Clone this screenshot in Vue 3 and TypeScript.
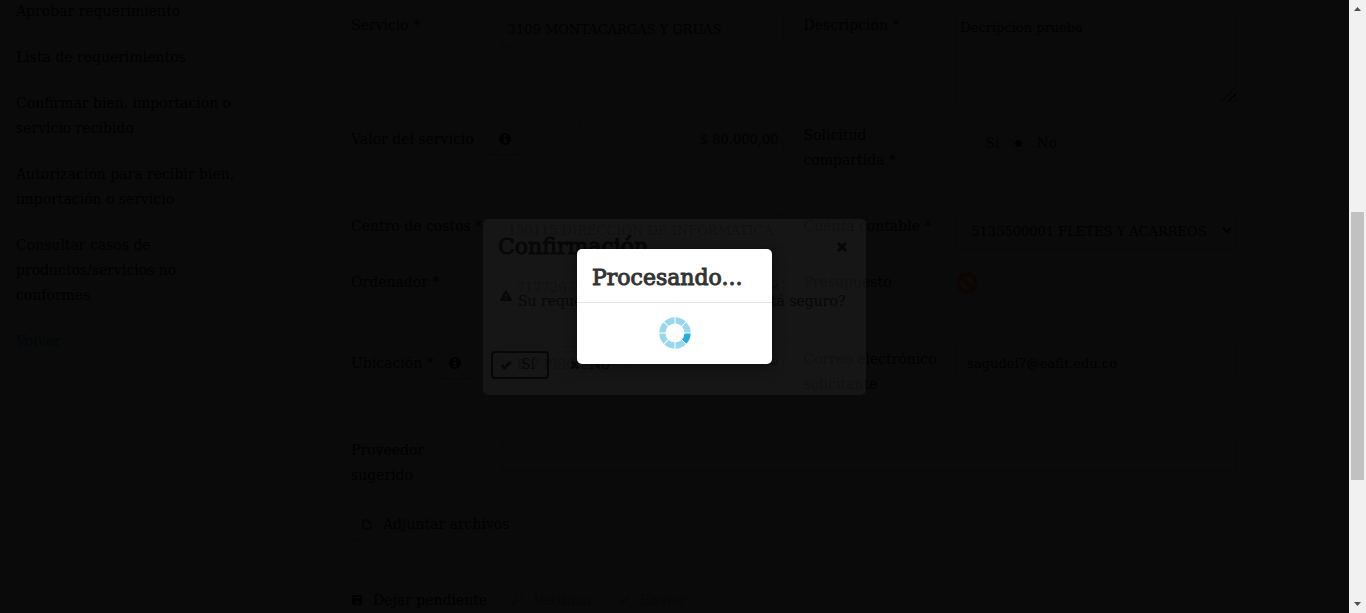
<script setup lang="ts">
import { ref } from 'vue'

const menu: string[] = [
  'Aprobar requerimiento',
  'Lista de requerimientos',
  'Confirmar bien, importación o servicio recibido',
  'Autorización para recibir bien, importación o servicio',
  'Consultar casos de productos/servicios no conformes',
]

const servicio = ref('3109 MONTACARGAS Y GRUAS')
const descripcion = ref('Decripcion prueba')
const valor = ref('$ 80.000,00')
const compartida = ref('no')
const centro = ref('150115 DIRECCIÓN DE INFORMÁTICA')
const ordenador = ref('71772675')
const ubicacion = ref('B-7 PISO 2')
const correo = ref('sagudel7@eafit.edu.co')
const proveedor = ref('')
const segments: number[] = [0, 45, 90, 135, 180, 225, 270, 315]
</script>

<template>
  <div class="window">
    <div class="page">
      <nav class="menu">
        <a v-for="item in menu" :key="item" href="#">{{ item }}</a>
        <a href="#" class="back">Volver</a>
      </nav>

      <form class="form" @submit.prevent>
        <div class="grid">
          <label for="servicio">Servicio *</label>
          <input id="servicio" v-model="servicio" type="text" />
          <label for="descripcion" class="second">Descripción *</label>
          <textarea id="descripcion" v-model="descripcion"></textarea>

          <div class="with-info">
            <label for="valor">Valor del servicio</label>
            <button type="button" class="info" aria-label="Ayuda valor">
              <svg viewBox="0 0 12 12"><circle cx="6" cy="6" r="6" /><path class="cut" d="M5 2h2v2H5zM4 5h3v4h1v1H4V9h1V6H4z" /></svg>
            </button>
          </div>
          <input id="valor" v-model="valor" class="amount" type="text" />
          <span class="second">Solicitud compartida *</span>
          <div class="radios">
            <label><input v-model="compartida" type="radio" name="compartida" value="si" /><span>Si</span></label>
            <label><input v-model="compartida" type="radio" name="compartida" value="no" /><span>No</span></label>
          </div>

          <label for="centro">Centro de costos *</label>
          <input id="centro" v-model="centro" type="text" />
          <label for="cuenta" class="second">Cuenta contable *</label>
          <div class="pick">
            <select id="cuenta"><option>5135500001 FLETES Y ACARREOS</option></select>
            <svg viewBox="0 0 10 10"><path d="M1 3l4 4 4-4" /></svg>
          </div>

          <label for="ordenador">Ordenador *</label>
          <div class="pick person">
            <select id="ordenador"><option>{{ ordenador }}</option></select>
            <svg viewBox="0 0 10 10"><path d="M1 3l4 4 4-4" /></svg>
          </div>
          <span class="second">Presupuesto</span>
          <svg class="ban" viewBox="0 0 20 20"><circle cx="10" cy="10" r="8" /><path d="M4 4l12 12" /></svg>

          <div class="with-info near">
            <label for="ubicacion">Ubicación *</label>
            <button type="button" class="info" aria-label="Ayuda ubicación">
              <svg viewBox="0 0 12 12"><circle cx="6" cy="6" r="6" /><path class="cut" d="M5 2h2v2H5zM4 5h3v4h1v1H4V9h1V6H4z" /></svg>
            </button>
          </div>
          <div class="pick person">
            <select id="ubicacion"><option>{{ ubicacion }}</option></select>
            <svg viewBox="0 0 10 10"><path d="M1 3l4 4 4-4" /></svg>
          </div>
          <label for="correo" class="second">Correo electrónico solicitante</label>
          <input id="correo" v-model="correo" class="mail" type="email" />

          <label for="proveedor" class="narrow">Proveedor sugerido</label>
          <input id="proveedor" v-model="proveedor" class="wide" type="text" />
        </div>

        <button type="button" class="btn attach">
          <svg viewBox="0 0 12 12"><path class="line" d="M7 2H3.500Q2 2 2 3.500v6Q2 11 3.500 11h5q1.500 0 1.500-1.500V5L7 2v3h3" /></svg>
          Adjuntar archivos
        </button>

        <div class="actions">
          <button type="button" class="btn">
            <svg viewBox="0 0 12 12"><path fill-rule="evenodd" d="M2 1h8q1 0 1 1v8q0 1-1 1H3L1 9V2q0-1 1-1zM3 3v1h6V3zM4 7v3h1V7zM6 7v3h2V7z" /></svg>
            Dejar pendiente
          </button>
          <button type="button" class="btn" disabled>
            <svg viewBox="0 0 12 12"><circle class="line" cx="7.500" cy="4.500" r="3" /><path class="thick" d="M5 7L1.500 10.500" /></svg>
            Verificar
          </button>
          <button type="button" class="btn" disabled>
            <svg viewBox="0 0 12 12"><path class="thick" d="M1.500 6L4.500 9L10.500 3" /></svg>
            Enviar
          </button>
        </div>
      </form>

      <div class="layer">
        <section class="confirm" role="dialog" aria-labelledby="confirm-title">
          <header>
            <h2 id="confirm-title">Confirmación</h2>
            <button type="button" class="close" aria-label="Cerrar">
              <svg viewBox="0 0 12 12"><path class="cross" d="M2 2l8 8M10 2l-8 8" /></svg>
            </button>
          </header>
          <div class="message">
            <svg viewBox="0 0 12 12"><path fill-rule="evenodd" d="M6 .5q.6 0 1 .7l4.800 8.300q.5 1.500-.8 1.500H1q-1.300 0-.8-1.500L5 1.200q.4-.7 1-.7zM5 4l.4 3.500h1.200L7 4zM5.200 8.300v1.500h1.600V8.300z" /></svg>
            <p>Su requerimiento será enviado. ¿Está seguro?</p>
          </div>
          <footer>
            <button type="button" class="choice yes">
              <svg viewBox="0 0 12 12"><path class="check" d="M1.500 6L4.500 9L10.500 3" /></svg>Sí
            </button>
            <button type="button" class="choice">
              <svg viewBox="0 0 12 12"><path class="cross" d="M2.500 2.500l7 7M9.500 2.500l-7 7" /></svg>No
            </button>
          </footer>
        </section>
      </div>

      <div class="layer">
        <section class="progress" role="dialog" aria-labelledby="progress-title">
          <h2 id="progress-title">Procesando...</h2>
          <div class="spin">
            <svg viewBox="-16 -16 32 32">
              <path
                v-for="a in segments"
                :key="a"
                :class="{ on: a === 0 }"
                :transform="`rotate(${a})`"
                d="M9.500 .5H15.700A15.700 15.700 0 0 1 11.500 10.700L7.100 6.400A9.500 9.500 0 0 0 9.500 .5z"
              />
            </svg>
          </div>
        </section>
      </div>
    </div>

    <div class="scrollbar" aria-hidden="true">
      <svg viewBox="0 0 17 17"><path d="M5 11h7L8.500 7z" /></svg>
      <div class="track"><div class="thumb"></div></div>
      <svg viewBox="0 0 17 17"><path d="M5 6h7L8.500 10z" /></svg>
    </div>
  </div>
</template>

<style>
body {
  background: #0a0a0a;
}
</style>

<style scoped>
* {
  box-sizing: border-box;
}
.window {
  display: flex;
  height: 100vh;
  overflow: hidden;
  background: #0a0a0a;
  color: #010101;
  font: 14px/25px 'Roboto Slab', 'DejaVu Serif', serif;
}
.page {
  position: relative;
  flex: 1;
  display: flex;
  align-items: flex-start;
  overflow: hidden;
}
button,
input,
select,
textarea {
  font: inherit;
  color: inherit;
  margin: 0;
}
svg {
  display: block;
  flex: none;
  width: 12px;
  height: 12px;
  fill: currentColor;
}
.line {
  fill: none;
  stroke: currentColor;
  stroke-width: 1;
}
.thick,
.check,
.cross {
  fill: none;
  stroke: currentColor;
  stroke-width: 2;
}
.check,
.cross {
  stroke-width: 3;
}
.menu {
  flex: none;
  width: 251px;
  margin-top: -11px;
  border: solid #090909;
  border-width: 0 1px;
}
.menu a {
  display: block;
  padding: 10px 15px;
  border-bottom: 1px solid #090909;
  color: inherit;
  text-decoration: none;
}
.menu .back {
  color: #020608;
  border: 0;
}
.form {
  flex: 1;
  margin: 12px 112px 0 100px;
}
.grid {
  display: grid;
  grid-template-columns: minmax(0, 151fr) minmax(0, 282fr) minmax(0, 172fr) minmax(0, 282fr);
  grid-template-rows: 110px 91px 56px 77px 91px 72px;
  align-items: start;
}
.grid > label,
.grid > span {
  padding-top: 1px;
}
.grid > .second {
  padding-left: 20px;
  padding-right: 16px;
}
.grid > .narrow {
  padding-right: 40px;
}
.grid > input,
textarea,
select {
  display: block;
  width: 100%;
  height: 35px;
  padding: 0 5px;
  background: #0a0a0a;
  border: 1px solid #080808;
  border-radius: 4px;
  outline: 0;
  font-size: 13px;
}
textarea {
  height: 90px;
  padding: 2px 4px;
}
textarea::-webkit-resizer {
  background: linear-gradient(135deg, transparent 50%, #020202 50%, #020202 56%, transparent 56%, transparent 72%, #020202 72%, #020202 78%, transparent 78%);
}
.grid > .amount {
  width: 206px;
  justify-self: end;
  padding: 0 4px;
  text-align: right;
}
.grid > .mail {
  padding: 0 11px;
}
.grid > .wide {
  grid-column: span 3;
}
.with-info {
  display: flex;
  align-items: center;
  gap: 14px;
  height: 35px;
  white-space: nowrap;
}
.near {
  gap: 4px;
}
.info {
  flex: none;
  display: flex;
  justify-content: center;
  align-items: center;
  width: 35px;
  height: 30px;
  padding: 0;
  background: transparent;
  border: 0;
  border-bottom: 1px solid #070707;
  border-radius: 4px;
}
.cut {
  fill: #0a0a0a;
}
.radios {
  display: flex;
  gap: 12px;
  padding: 9px 5px;
}
.radios label {
  display: flex;
  align-items: center;
  gap: 10px;
}
.radios input {
  appearance: none;
  width: 15px;
  height: 15px;
  border: 1px solid #090909;
  border-radius: 50%;
}
.radios input:checked {
  background: radial-gradient(circle, #000 3px, transparent 4px);
}
.pick {
  position: relative;
}
.pick select {
  appearance: none;
  height: 36px;
  padding: 0 28px 0 15px;
}
.pick.person select {
  padding-left: 14px;
}
.pick svg {
  position: absolute;
  right: 5px;
  top: 12px;
  width: 10px;
  height: 10px;
  fill: none;
  stroke: currentColor;
  stroke-width: 2;
}
.ban {
  width: 22px;
  height: 22px;
  margin: 3px 0 0 1px;
  fill: none;
  stroke: #0e0402;
  stroke-width: 3;
}
.btn {
  display: flex;
  align-items: center;
  gap: 10px;
  height: 31px;
  padding: 0 16px 0 10px;
  background: transparent;
  border: 0;
  border-bottom: 1px solid #080808;
  border-radius: 4px;
  white-space: nowrap;
}
.btn:disabled {
  color: #070707;
}
.actions {
  display: flex;
  gap: 14px;
  margin-top: 45px;
}
.actions .btn {
  padding: 0 10px 0 0;
}
.layer {
  position: absolute;
  inset: 0;
  display: flex;
  align-items: center;
  justify-content: center;
}
h2 {
  margin: 0;
  font-size: 22px;
  line-height: 30px;
  font-weight: 400;
  -webkit-text-stroke: 1px currentColor;
}
.confirm {
  width: 383px;
  background: rgba(53, 53, 53, 0.3);
  border-radius: 5px;
  color: #070707;
}
.confirm header {
  display: flex;
  justify-content: space-between;
  align-items: center;
  height: 52px;
  padding: 6px 18px 0 15px;
  border-bottom: 1px solid #151515;
}
.close {
  padding: 0;
  background: none;
  border: 0;
}
.message {
  display: flex;
  align-items: center;
  gap: 6px;
  height: 66px;
  padding: 0 0 15px 17px;
  border-bottom: 1px solid #151515;
  white-space: nowrap;
}
.message p {
  margin: 12px 0 0;
}
footer {
  display: flex;
  gap: 8px;
  padding: 14px 8px 16px;
}
.choice {
  display: flex;
  align-items: center;
  gap: 8px;
  height: 28px;
  padding: 0 15px 0 11px;
  background: transparent;
  border: 1px solid #141414;
  border-radius: 4px;
}
.yes {
  gap: 9px;
  padding: 0 12px 0 7px;
  border: 2px solid #060606;
}
.progress {
  width: 195px;
  background: #fff;
  border-radius: 5px;
  color: #333;
  box-shadow: 0 2px 12px rgba(0, 0, 0, 0.5);
}
.progress h2 {
  padding: 14px 15px 9px;
  border-bottom: 1px solid #e5e5e5;
}
.spin {
  display: flex;
  justify-content: center;
  padding: 14px 0 15px;
}
.spin svg {
  width: 32px;
  height: 32px;
  fill: #98d8ed;
}
.spin .on {
  fill: #24ade0;
}
.scrollbar {
  flex: none;
  display: flex;
  flex-direction: column;
  width: 17px;
  background: #f1f1f1;
}
.scrollbar svg {
  width: 17px;
  height: 17px;
  fill: #505050;
}
.track {
  flex: 1;
  padding: 0 2px;
}
.track::before {
  content: '';
  display: block;
  height: 33.700%;
}
.thumb {
  height: 46.300%;
  background: #c1c1c1;
}
</style>
